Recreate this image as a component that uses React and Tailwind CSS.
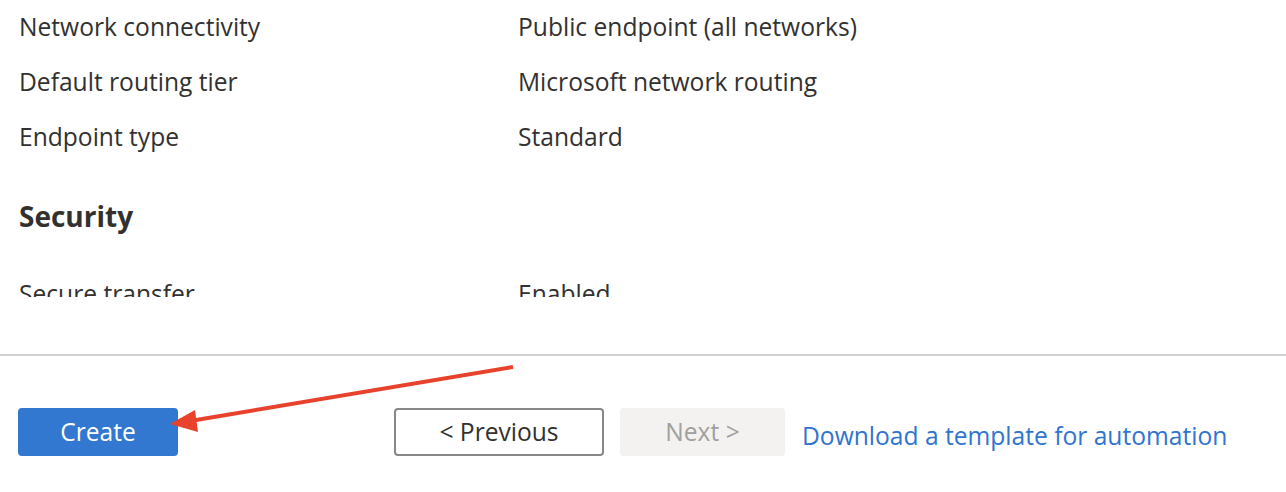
import React from "react";

const rows = [
  { label: "Network connectivity", value: "Public endpoint (all networks)" },
  { label: "Default routing tier", value: "Microsoft network routing" },
  { label: "Endpoint type", value: "Standard" },
];

function Row({ label, value }) {
  return (
    <div className="flex h-[55px] items-center text-[24.6px] text-[#323130]">
      <div className="w-[499px]">{label}</div>
      <div>{value}</div>
    </div>
  );
}

export default function App() {
  return (
    <div className="relative w-[1286px] h-[492px] bg-white font-['Open_Sans',sans-serif]">
      <div className="h-[297px] overflow-hidden pl-[19px]">
        {rows.map((r) => (
          <Row key={r.label} {...r} />
        ))}
        <h2 className="mt-[31px] h-[40px] flex items-center text-[28px] font-bold text-[#323130]">
          Security
        </h2>
        <div className="mt-[31px]">
          <Row label="Secure transfer" value="Enabled" />
        </div>
      </div>

      <div className="mt-[57px] h-[2px] bg-[#d2d0ce]" />

      <div className="flex items-center pl-[18px] pt-[52px]">
        <button className="w-[160px] h-[48px] rounded-[4px] bg-[#3277d0] text-white text-[24.6px]">
          Create
        </button>
        <button className="ml-[216px] w-[210px] h-[48px] rounded-[4px] border-2 border-[#8a8886] bg-white text-[24.6px] font-medium text-[#323130]">
          &lt; Previous
        </button>
        <button className="ml-[16px] w-[165px] h-[48px] rounded-[4px] bg-[#f3f2f1] text-[24.6px] text-[#a19f9d]">
          Next &gt;
        </button>
        <a className="ml-[17px] mt-[8px] text-[24.6px] text-[#2f74d0]" href="#">
          Download a template for automation
        </a>
      </div>

      <svg className="absolute left-0 top-0 pointer-events-none" width="1286" height="492">
        <line x1="513" y1="367" x2="190" y2="421" stroke="#e8412c" strokeWidth="4" />
        <polygon points="170,424 195,410 198,432" fill="#e8412c" />
      </svg>
    </div>
  );
}
